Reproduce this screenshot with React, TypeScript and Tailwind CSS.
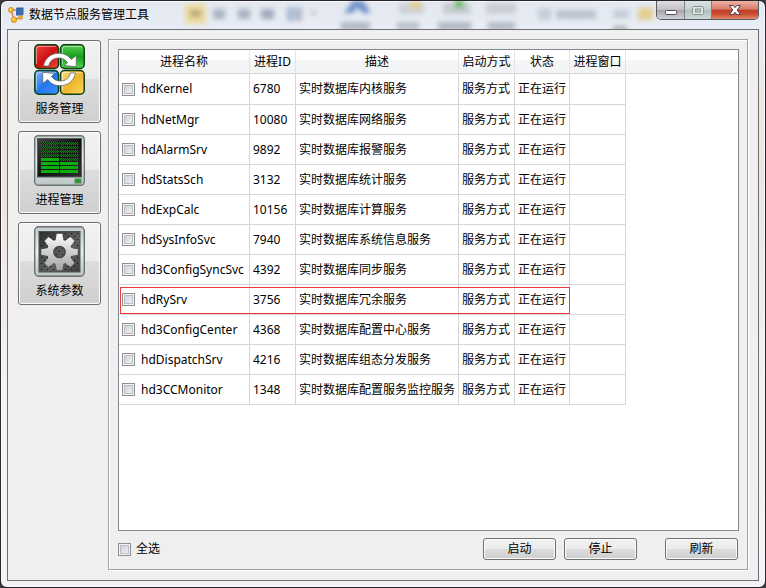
import type { ReactNode } from "react";

type Service = { name: string; pid: string; desc: string };

const services: Service[] = [
  { name: "hdKernel", pid: "6780", desc: "实时数据库内核服务" },
  { name: "hdNetMgr", pid: "10080", desc: "实时数据库网络服务" },
  { name: "hdAlarmSrv", pid: "9892", desc: "实时数据库报警服务" },
  { name: "hdStatsSch", pid: "3132", desc: "实时数据库统计服务" },
  { name: "hdExpCalc", pid: "10156", desc: "实时数据库计算服务" },
  { name: "hdSysInfoSvc", pid: "7940", desc: "实时数据库系统信息服务" },
  { name: "hd3ConfigSyncSvc", pid: "4392", desc: "实时数据库同步服务" },
  { name: "hdRySrv", pid: "3756", desc: "实时数据库冗余服务" },
  { name: "hd3ConfigCenter", pid: "4368", desc: "实时数据库配置中心服务" },
  { name: "hdDispatchSrv", pid: "4216", desc: "实时数据库组态分发服务" },
  { name: "hd3CCMonitor", pid: "1348", desc: "实时数据库配置服务监控服务" },
];

const headers = ["进程名称", "进程ID", "描述", "启动方式", "状态", "进程窗口"];
const highlighted = "hdRySrv";

const checkboxClass =
  "block size-[13px] shrink-0 appearance-none border border-[#8e8f8f] bg-linear-to-br from-[#c6cad2] to-[#f8f8f8] shadow-[inset_0_0_0_1px_#f4f4f4,inset_0_0_0_2px_#b9bec6] checked:from-[#3a5f9a] checked:to-[#6f93c9]";

function AppIcon() {
  return (
    <svg className="size-4" viewBox="0 0 16 16" aria-hidden="true">
      <path d="M3 3 L6 13 L13 10 M3 3 H8" fill="none" stroke="#d4502a" strokeWidth="1" />
      <path d="M8 1.500 L9 .5 H15.500 V7.500 L14.500 8.500 H8z" fill="#2c5ea8" />
      <path d="M8 3h7M8 5h7M8 7h7" stroke="#5f8bc8" strokeWidth=".7" />
      <circle cx="3" cy="3" r="2.600" fill="#f5b32c" stroke="#c98214" strokeWidth=".7" />
      <circle cx="6" cy="12.700" r="2.800" fill="#f5b32c" stroke="#c98214" strokeWidth=".7" />
      <circle cx="12.700" cy="10.500" r="1.900" fill="#f5b32c" stroke="#c98214" strokeWidth=".7" />
      <circle cx="2.500" cy="2.400" r="1" fill="#ffe08a" />
      <circle cx="5.500" cy="12" r="1" fill="#ffe08a" />
    </svg>
  );
}

function ServiceIcon() {
  return (
    <svg className="size-[51px]" viewBox="0 0 51 51" aria-hidden="true">
      <defs>
        <linearGradient id="red" x1="0" y1="0" x2="1" y2="1">
          <stop offset="0" stopColor="#f04a4a" />
          <stop offset=".5" stopColor="#cf1111" />
          <stop offset="1" stopColor="#ee4438" />
        </linearGradient>
        <linearGradient id="green" x1="0" y1="0" x2="0" y2="1">
          <stop offset="0" stopColor="#5fcf55" />
          <stop offset=".5" stopColor="#14a01b" />
          <stop offset="1" stopColor="#51d94d" />
        </linearGradient>
        <linearGradient id="blue" x1="0" y1="0" x2="1" y2="1">
          <stop offset="0" stopColor="#8abaff" />
          <stop offset=".5" stopColor="#2277ee" />
          <stop offset="1" stopColor="#3f90ff" />
        </linearGradient>
        <linearGradient id="yellow" x1="0" y1="0" x2="1" y2="1">
          <stop offset="0" stopColor="#ffe48a" />
          <stop offset=".5" stopColor="#efb52c" />
          <stop offset="1" stopColor="#ffd55c" />
        </linearGradient>
      </defs>
      <g stroke="#0d4214" strokeWidth="1.500">
        <rect x=".8" y=".8" width="23.700" height="23.700" rx="4" fill="url(#red)" />
        <rect x="26.500" y=".8" width="23.700" height="23.700" rx="4" fill="url(#green)" />
        <rect x=".8" y="26.500" width="23.700" height="23.700" rx="4" fill="url(#blue)" />
        <rect x="26.500" y="26.500" width="23.700" height="23.700" rx="4" fill="url(#yellow)" />
      </g>
      <g fill="none" strokeWidth="1" strokeOpacity=".45" stroke="#fff">
        <path d="M2.500 20V5q0-2.500 2.500-2.500h17M28.500 20V5q0-2.500 2.500-2.500h17M2.500 46V31q0-2.500 2.500-2.500h17M28.500 46V31q0-2.500 2.500-2.500h17" />
      </g>
      <g fill="#fff" stroke="#555" strokeWidth=".7" strokeLinejoin="round">
        <path id="arrow" d="M9.500 22C11 14 17 9.500 24.500 9.300c6-.1 10 2.400 12.700 6.200L42.300 11.500V22.600L30 21.600l3.600-3c-2.200-3-5.200-4.600-9.100-4.600-5.200 0-8.500 2.800-9.800 8z" />
        <path d="M9.500 22C11 14 17 9.500 24.500 9.300c6-.1 10 2.400 12.700 6.200L42.300 11.500V22.600L30 21.600l3.600-3c-2.200-3-5.200-4.600-9.100-4.600-5.200 0-8.500 2.800-9.800 8z" transform="rotate(180 25.500 25.500)" />
      </g>
    </svg>
  );
}

const meterRows = [0, 1, 2, 3, 4, 5, 6, 7];

function ProcessIcon() {
  return (
    <svg className="size-[51px]" viewBox="0 0 51 51" aria-hidden="true">
      <defs>
        <linearGradient id="case" x1="0" y1="0" x2="0" y2="1">
          <stop offset="0" stopColor="#c6cece" />
          <stop offset=".5" stopColor="#edf0f1" />
          <stop offset="1" stopColor="#b9c5c3" />
        </linearGradient>
        <linearGradient id="screen" x1="0" y1="0" x2="1" y2="1">
          <stop offset="0" stopColor="#444" />
          <stop offset=".5" stopColor="#111" />
          <stop offset="1" stopColor="#303030" />
        </linearGradient>
        <pattern id="dither" width="2" height="2" patternUnits="userSpaceOnUse">
          <rect width="2" height="2" fill="#0b280b" />
          <rect width="1" height="1" fill="#12801a" />
          <rect x="1" y="1" width="1" height="1" fill="#12801a" />
        </pattern>
      </defs>
      <rect x=".7" y=".7" width="49.600" height="49.600" rx="3.500" fill="url(#case)" stroke="#6d7477" strokeWidth="1.400" />
      <rect x="3.500" y="3.500" width="44" height="38.500" fill="url(#screen)" stroke="#555d5d" />
      {meterRows.map((row) => (
        <g key={row} shapeRendering="crispEdges">
          <rect x="7" y={7 + row * 4} width="18" height="3" fill={row > 3 ? "#0bb00d" : "url(#dither)"} />
          <rect x="26" y={7 + row * 4} width="18" height="3" fill={row > 4 ? "#0bb00d" : "url(#dither)"} />
        </g>
      ))}
      <rect x="41" y="44" width="6" height="4" fill="#16a516" stroke="#698069" />
    </svg>
  );
}

const teeth = [0, 45, 90, 135, 180, 225, 270, 315];

function SettingsIcon() {
  return (
    <svg className="size-[51px]" viewBox="0 0 51 51" aria-hidden="true">
      <defs>
        <linearGradient id="frame" x1="0" y1="0" x2="0" y2="1">
          <stop offset="0" stopColor="#c2cacd" />
          <stop offset=".5" stopColor="#e9eeef" />
          <stop offset="1" stopColor="#bac6c3" />
        </linearGradient>
        <linearGradient id="plate" x1="0" y1="0" x2="1" y2="1">
          <stop offset="0" stopColor="#303030" />
          <stop offset=".6" stopColor="#606060" />
          <stop offset="1" stopColor="#3f3f3f" />
        </linearGradient>
        <linearGradient id="gear" gradientUnits="userSpaceOnUse" x1="0" y1="8" x2="0" y2="44">
          <stop offset="0" stopColor="#fcfcfc" />
          <stop offset="1" stopColor="#a4a4a4" />
        </linearGradient>
        <pattern id="holes" width="6" height="6" patternUnits="userSpaceOnUse">
          <circle cx="1.500" cy="1.500" r=".8" fill="#222" />
          <circle cx="4.500" cy="4.500" r=".8" fill="#222" />
        </pattern>
        <mask id="gearShape" maskUnits="userSpaceOnUse" x="0" y="0" width="51" height="51">
          <circle cx="25.500" cy="26" r="12.500" fill="#fff" />
          {teeth.map((angle) => (
            <path key={angle} d="M21.300 16L22.700 7.700h5.600L29.700 16z" transform={`rotate(${angle} 25.500 26)`} fill="#fff" />
          ))}
          <circle cx="25.500" cy="26" r="5" fill="#000" />
        </mask>
      </defs>
      <rect x=".7" y=".7" width="49.600" height="49.600" rx="4" fill="url(#frame)" stroke="#697174" strokeWidth="1.400" />
      <rect x="5" y="5.500" width="41" height="40.500" fill="url(#plate)" stroke="#4c5354" />
      <rect x="5" y="5.500" width="41" height="40.500" fill="url(#holes)" />
      <rect x="1" y="1" width="49" height="49" fill="url(#gear)" mask="url(#gearShape)" />
      <circle cx="25.500" cy="26" r="5.500" fill="none" stroke="#444" strokeWidth="1.600" />
    </svg>
  );
}

function SideButton({ icon, label }: { icon: ReactNode; label: string }) {
  return (
    <button
      type="button"
      className="flex h-[83px] w-[83px] flex-col items-center rounded-[3px] border border-[#707070] bg-[linear-gradient(#f2f2f2,#ebebeb_47%,#dddddd_47%,#cfcfcf)] pt-[3px] shadow-[inset_0_0_0_1px_#fbfbfb]"
    >
      {icon}
      <span className="mt-1 leading-5">{label}</span>
    </button>
  );
}

function PushButton({ label }: { label: string }) {
  return (
    <button
      type="button"
      className="h-[22px] w-[73px] rounded-[3px] border border-[#707070] bg-[linear-gradient(#f2f2f2,#ebebeb_50%,#dddddd_50%,#cfcfcf)] leading-5 shadow-[inset_0_0_0_1px_#fbfbfb]"
    >
      {label}
    </button>
  );
}

function GlassBackdrop() {
  return (
    <svg className="absolute inset-0 h-7 w-full" aria-hidden="true">
      <defs>
        <filter id="glass" x="-50%" y="-50%" width="200%" height="200%">
          <feGaussianBlur stdDeviation="2.500" />
        </filter>
      </defs>
      <g filter="url(#glass)">
        <rect x="184" y="3" width="21" height="20" fill="#eddc9f" />
        <rect x="189" y="9" width="11" height="7" fill="#b5a878" />
        <rect x="212" y="8" width="12" height="10" fill="#a9b3c2" />
        <rect x="237" y="8" width="12" height="10" fill="#a9b3c2" />
        <rect x="260" y="8" width="13" height="10" fill="#a1abbc" />
        <rect x="286" y="6" width="6" height="14" fill="#a3b7d6" />
        <rect x="293" y="6" width="8" height="14" fill="#b3bbc8" />
        <rect x="310" y="10" width="5" height="4" fill="#bcc3c4" />
        <path d="M343 12L352 0h10l8 12h-8l-6-6-4 6z" fill="#6d8fc6" />
        <rect x="340" y="21" width="29" height="8" fill="#b0b7c3" />
        <rect x="396" y="21" width="22" height="8" fill="#b9c0cb" />
        <rect x="437" y="21" width="33" height="8" fill="#b0b7c3" />
        <rect x="487" y="21" width="27" height="8" fill="#b3bac6" />
        <rect x="398" y="2" width="25" height="11" fill="#cdd0d4" />
        <rect x="410" y="0" width="9" height="8" fill="#e8cf8c" />
        <rect x="442" y="2" width="27" height="11" fill="#c4cad0" />
        <circle cx="458" cy="3" r="5" fill="#73bd70" />
        <rect x="485" y="2" width="30" height="11" fill="#c9ced6" />
        <rect x="537" y="7" width="13" height="12" fill="#c6cdd8" />
        <rect x="555" y="9" width="40" height="9" fill="#bac3cf" />
        <rect x="612" y="9" width="16" height="8" fill="#c4ccd9" />
        <rect x="637" y="7" width="15" height="12" fill="#e3cd91" />
        <rect x="612" y="25" width="14" height="5" fill="#a8b0ad" />
      </g>
    </svg>
  );
}

export default function App() {
  return (
    <div className="flex min-h-screen flex-col bg-[#3a3a40] font-['Noto_Sans','Noto_Sans_CJK_SC',sans-serif] text-xs text-black">
      <div className="relative flex flex-1 flex-col rounded-[7px] border border-[#26262c] bg-[linear-gradient(#e3e8f0,#e9edf5_30px,#f1e6de_90px,#efe4dd_180px,#f3f1f1_380px,#f3f3f5)] px-1.5 pb-1.5 shadow-[inset_0_0_0_1px_#f7f9fc]">
        <GlassBackdrop />
        <header className="relative flex h-7 items-start justify-between pl-px">
          <h1 className="flex items-center gap-[5px] pt-1.5 leading-4">
            <AppIcon />
            数据节点服务管理工具
          </h1>
          <div className="flex h-[19px] overflow-hidden rounded-b-[5px] border border-t-0 border-[#555d68]">
            <button type="button" aria-label="最小化" className="flex w-7 items-center justify-center border-r border-[#777f89] bg-[linear-gradient(#e2dfe3,#c2bbc3_50%,#a7a0a9_50%,#cfd1d4)]">
              <svg className="mt-1 h-[5px] w-3" viewBox="0 0 12 5" aria-hidden="true">
                <rect x=".5" y=".5" width="11" height="4" rx="1" fill="#fff" stroke="#4a4d57" />
              </svg>
            </button>
            <button type="button" aria-label="最大化" disabled className="flex w-[27px] items-center justify-center border-r border-[#777f89] bg-[linear-gradient(#dbe5e3,#c2d1cc_50%,#afc0ba_50%,#ced9d8)]">
              <svg className="h-[9px] w-3" viewBox="0 0 12 9" aria-hidden="true">
                <rect x=".5" y=".5" width="11" height="8" rx="1" fill="#e0e6e5" stroke="#8a9693" />
                <rect x="3.500" y="3" width="5" height="3" fill="#b9c8c3" stroke="#8a9693" />
              </svg>
            </button>
            <button type="button" aria-label="关闭" className="flex w-[46px] items-center justify-center bg-[linear-gradient(#eeb2a7,#d97b6a_46%,#bf3c25_50%,#ce5135_75%,#e68b6b)]">
              <svg className="h-[10px] w-3" viewBox="0 0 12 10" aria-hidden="true">
                <path d="M.5.5h3.700L6 2.700 7.800.5h3.700L8.200 5l3.300 4.500H7.800L6 7.300 4.200 9.500H.5L3.800 5z" fill="#fff" stroke="#4f4450" />
              </svg>
            </button>
          </div>
        </header>

        <main className="relative flex flex-1 gap-[7px] border border-[#6d7073] bg-[#efefef] px-2.5 pt-[9px] pb-2.5">
          <nav className="flex flex-col gap-2 pt-px" aria-label="功能">
            <SideButton icon={<ServiceIcon />} label="服务管理" />
            <SideButton icon={<ProcessIcon />} label="进程管理" />
            <SideButton icon={<SettingsIcon />} label="系统参数" />
          </nav>

          <section className="flex min-w-0 flex-1 flex-col gap-[7px] border border-[#a0a0a0] py-[9px] pr-2 pl-[9px] shadow-[inset_1px_1px_0_#fff,1px_1px_0_#fff]">
            <div className="flex-1 border border-[#828790] bg-white">
              <table className="w-full table-fixed border-separate border-spacing-0">
                <colgroup>
                  <col className="w-[131px]" />
                  <col className="w-[46px]" />
                  <col className="w-[163px]" />
                  <col className="w-[56px]" />
                  <col className="w-[55px]" />
                  <col className="w-[56px]" />
                  <col />
                </colgroup>
                <thead>
                  <tr className="bg-[linear-gradient(#ffffff_40%,#f4f6f8_45%,#f1f3f5)]">
                    {headers.map((title) => (
                      <th key={title} scope="col" className="h-6 border-r border-b border-r-[#e3e5e8] border-b-[#d5d5d5] p-0 font-normal whitespace-nowrap">
                        {title}
                      </th>
                    ))}
                    <td className="border-b border-[#d5d5d5] p-0" />
                  </tr>
                </thead>
                <tbody className="[&_td]:p-0 [&_td]:whitespace-nowrap">
                  {services.map((service) => (
                    <tr key={service.name} className="h-[30px] first:h-[31px] [&>td]:border-r [&>td]:border-b [&>td]:border-[#d5d5d5]">
                      <td className="relative">
                        <label className="flex items-center gap-1.5 pl-[3px]">
                          <input type="checkbox" className={checkboxClass} />
                          {service.name}
                        </label>
                        {service.name === highlighted && (
                          <span className="pointer-events-none absolute top-[2px] left-px h-[27px] w-[450px] border border-[#f03a3a]" />
                        )}
                      </td>
                      <td>
                        <span className="pl-[3px]">{service.pid}</span>
                      </td>
                      <td>
                        <span className="pl-[3px]">{service.desc}</span>
                      </td>
                      <td>
                        <span className="pl-[3px]">服务方式</span>
                      </td>
                      <td>
                        <span className="pl-[3px]">正在运行</span>
                      </td>
                      <td />
                    </tr>
                  ))}
                </tbody>
              </table>
            </div>

            <footer className="flex items-center gap-2 pr-px">
              <label className="mr-auto flex items-center gap-[5px]">
                <input type="checkbox" className={checkboxClass} />
                全选
              </label>
              <PushButton label="启动" />
              <PushButton label="停止" />
              <div className="pl-5">
                <PushButton label="刷新" />
              </div>
            </footer>
          </section>
        </main>
      </div>
    </div>
  );
}
